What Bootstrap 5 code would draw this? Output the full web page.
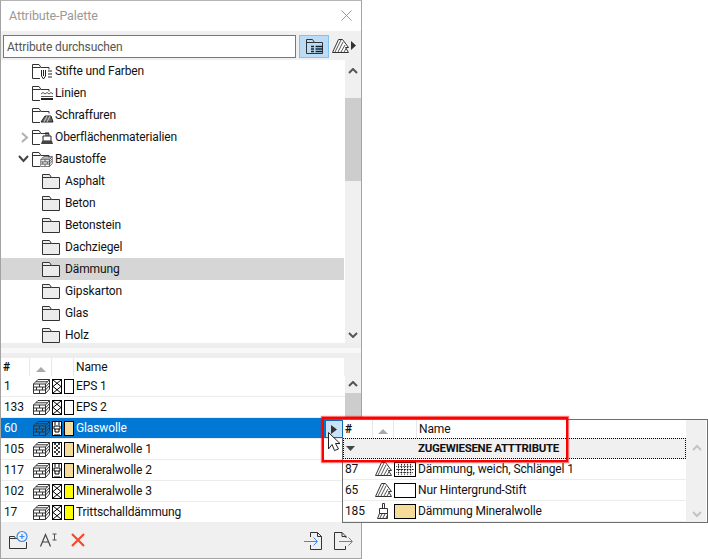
<!DOCTYPE html>
<html lang="de"><head><meta charset="utf-8"><title>Attribute-Palette</title>
<link href="https://cdn.jsdelivr.net/npm/bootstrap@5.3.0/dist/css/bootstrap.min.css" rel="stylesheet">
<style>
html,body{margin:0;height:559px;width:708px;overflow:hidden;background:#fff}
body{font-family:Roboto,"Noto Sans",sans-serif;font-size:12px;letter-spacing:-.12px;line-height:1;color:#111;position:relative}
svg{display:block;flex:none;overflow:visible}
.pal{width:362px;height:559px;border:1px solid #a3a3a3;border-top-color:#b5b5b5;background:#f0f0f0}
.ttl{height:30px;padding:0 9px 0 8px;color:#999;font-size:12.5px;background:#fff}
.tbar{height:29px;background:#f0f0f0;padding:4px 0 3px 2px}
.srch{width:293px;height:23px;border:1px solid #777;background:#fff;color:#555;padding:0 0 0 3px}
.tog{width:30px;height:23px;background:#bcdcf5;border:1px solid #85c1ee;margin-left:3px;padding-left:6px}
.treew{height:283px;background:#f0f0f0}
.treel{width:344px;background:#fff;overflow:hidden}
.tr{height:22px;flex:none}
.tr.sel{background:#d6d6d6;margin-right:1px}
.sp1{width:31px}.sp2{width:41px}
.sb{width:16px;margin-left:0;background:#f0f0f0;position:relative}
.thumb{position:absolute;left:0;right:0;background:#cdcdcd}
.up,.dn{position:absolute;left:3px}
.mini{margin-left:-9px}
.tl1{margin-left:2px}
.tl2{margin-left:5px}
.sep1{height:5px;background:#eee}.sep2{height:5px;background:#f8f8f8}.sep3{height:5px;background:#eee}
.hd{height:18px;width:343px;background:#fff}
.c1{width:28px;padding-left:2px}.c2{width:22px;border-left:1px solid #e8e8e8}.c3{width:22px;border-left:1px solid #e8e8e8}
.hd .c1,.hd .c2,.hd .c3{height:100%}
.nm{border-left:1px solid #e8e8e8;padding:0 0 0 2px;height:100%;display:flex;align-items:center}
.lst{height:146px;background:#fff;overflow:hidden}
.lbody{width:344px}
.rw{height:21px;border-bottom:1px solid #ececec;flex:none}
.rw.on{background:#0078d4;color:#fff}
.n1{width:28px;padding:0 0 0 3px}.ic{width:23px;padding-left:4px}.ic2{width:24px;gap:2px}
.sw{width:10px;height:15px;border:1px solid #000;background:#fff}
.sw.y{background:#ffff00}.sw.t{background:#f5dc9a}
.ftr{height:36px;background:#f0f0f0;padding:0 0 0 8px}
.pop{position:absolute;left:342px;top:419px;width:366px;height:104px;border:1px solid #6e6e6e;background:#fff}
.pl{width:343px}
.ph{height:18px}
.pc1{width:29px;padding:0 0 0 2px}.pc2{width:21px;border-left:1px solid #e8e8e8;height:100%}.pc3{width:23px;border-left:1px solid #e8e8e8;height:100%}
.grp{height:21px;background:#f0f0f0;border:1px dotted #000;width:343px;font-weight:700;font-size:11.5px;letter-spacing:-.3px;flex:none}
.pr{height:21px;border-bottom:1px solid #ececec;flex:none}
.pn{width:32px;padding:0 0 0 2px}.pi{width:19px}
.psw{width:22px;height:15px;border:1px solid #000;background:#fff;margin-right:2px}
.psw.t{background:#f5dc9a}
.psb{background:#f0f0f0;position:relative;margin-right:1px}
.btnx{position:absolute;left:325px;top:420px;width:18px;height:18px;background:#c8e2f7;border:1px solid #0f6cb5}
.redb{position:absolute;left:322px;top:417px;width:246px;height:45px;border:2px solid #f00;box-shadow:0 0 1px 1px rgba(255,0,0,.55)}
.curs{position:absolute;left:328px;top:432px}
</style></head><body>
<svg width="0" height="0" style="position:absolute"><defs>
<symbol id="fd" viewBox="0 0 18 15"><path d="M.5 14.500V.5h7l2 3h8v11z" fill="#ececec" stroke="#333"/><path d="M.5 3.500h9" stroke="#333" fill="none"/></symbol>
<symbol id="fo" viewBox="0 0 18 15"><path d="M8 14.500H.5V.5h6.500l2 3h8v2M.5 3.500h8" fill="none" stroke="#333"/></symbol>
<symbol id="bk" viewBox="0 0 17 15"><path d="M.5 5 5 .5h11.500V10l-4 4.500H.5z" fill="none" stroke="#333"/><path d="M.5 5h12v9.500M12.500 5l4-4.500M.5 8h12M.5 11h12M6.500 5v3M3.500 8v3M9.500 8v3M6.500 11v3M3 2.800h11.500M12.500 8l4-4.500M12.500 11l4-4.500" fill="none" stroke="#333"/></symbol>
<symbol id="hx" viewBox="0 0 10 15"><rect x=".5" y=".5" width="9" height="14" fill="#fff" stroke="#000"/><path d="M1 1l8 6.500L1 14M9 1L1 7.500 9 14" fill="none" stroke="#000"/></symbol>
<symbol id="hg" viewBox="0 0 10 15"><rect x=".5" y=".5" width="9" height="14" fill="#fff" stroke="#000"/><path d="M3 1v3M7 1v3M2 5h6v3H2zM3 8v3M7 8v3M3 11h4M2 14h6" fill="none" stroke="#000"/></symbol>
<symbol id="hm" viewBox="0 0 10 15"><rect x=".5" y=".5" width="9" height="14" fill="#fff" stroke="#000"/><path d="M2 2h2M6 2h2M4 4h2M2 6h2M6 6h2M4 8h2M2 10h2M6 10h2M4 12h2" stroke="#000" fill="none" stroke-width="1.500"/></symbol>
<symbol id="ht" viewBox="0 0 17 14"><path d="M.5 13.500l6-13h4l6 8h-3l3 5z" fill="#fff" stroke="#333"/><path d="M3 13l6-12M6 13l5-10M9 13l4-7M12 13l2.500-4" stroke="#555" fill="none"/></symbol>
<symbol id="upa" viewBox="0 0 10 6"><path d="M1 5l4-4 4 4" fill="none" stroke="#555" stroke-width="2"/></symbol>
<symbol id="dna" viewBox="0 0 10 6"><path d="M1 1l4 4 4-4" fill="none" stroke="#555" stroke-width="2"/></symbol>
<symbol id="ups" viewBox="0 0 10 6"><path d="M0 6l5-5 5 5z" fill="#a9a9a9"/></symbol>
</defs></svg>

<div class="pal d-flex flex-column">
  <div class="ttl d-flex align-items-center justify-content-between">
    <span>Attribute-Palette</span>
    <svg width="11" height="11" viewBox="0 0 11 11" style="margin-top:-1px"><path d="M.5.500l10 10M10.500.500l-10 10" stroke="#999" fill="none"/></svg>
  </div>
  <div class="tbar d-flex align-items-start">
    <div class="srch d-flex align-items-center">Attribute durchsuchen</div>
    <div class="tog d-flex align-items-center">
      <svg width="17" height="15" viewBox="0 0 17 15"><path d="M.5 14.500V.5h6l2 3h8v11z" fill="none" stroke="#333"/><path d="M.5 3.500h8" stroke="#333"/><path d="M5 7.500h3M5 10h3M5 12.500h3M9.500 7.500h7M9.500 10h7M9.500 12.500h7" stroke="#123" stroke-width="1.500"/></svg>
    </div>
    <svg width="17" height="14" viewBox="0 0 17 14" style="margin:4px 0 0 3px"><use href="#ht"/></svg>
    <svg width="5" height="9" viewBox="0 0 5 9" style="margin:6px 0 0 2px"><path d="M0 0l5 4.500L0 9z" fill="#333"/></svg>
  </div>
  <div class="treew d-flex">
    <div class="treel d-flex flex-column">
      <div class="tr d-flex align-items-center"><i class="sp1"></i><svg width="18" height="15"><use href="#fo"/></svg><svg class="mini" width="12" height="15" viewBox="0 0 12 15"><path d="M.5 6v6l2 3 2-3V6M2.500 6v6M7 7h4M7 10h4M7 13h4" fill="none" stroke="#222"/></svg><span class="tl1">Stifte und Farben</span></div>
      <div class="tr d-flex align-items-center"><i class="sp1"></i><svg width="18" height="15"><use href="#fo"/></svg><svg class="mini" width="12" height="15" viewBox="0 0 12 15"><path d="M0 8l2-1.500L4 8l2-1.500L8 8l2-1.500L12 8" fill="none" stroke="#555"/><path d="M0 10.500h12" stroke="#555"/><path d="M0 13h12" stroke="#222" stroke-width="2"/></svg><span class="tl1">Linien</span></div>
      <div class="tr d-flex align-items-center"><i class="sp1"></i><svg width="18" height="15"><use href="#fo"/></svg><svg class="mini" width="12" height="15" viewBox="0 0 12 15"><path d="M0 14l4-6h6l2 6z" fill="#666" stroke="#222"/><path d="M3 14l3-6M6 14l3-6" stroke="#ccc"/></svg><span class="tl1">Schraffuren</span></div>
      <div class="tr d-flex align-items-center"><svg width="8" height="11" viewBox="0 0 8 11" style="margin:0 3px 0 20px"><path d="M1 1l5 4.500-5 4.500" fill="none" stroke="#b0b0b0" stroke-width="2"/></svg><svg width="18" height="15"><use href="#fo"/></svg><svg class="mini" width="12" height="15" viewBox="0 0 12 15"><path d="M5 2v4M7 2v4M2 6h8v5H2z" fill="#fff" stroke="#222"/><path d="M1 11h10l1 3H0z" fill="#444"/></svg><span class="tl1">Oberflächenmaterialien</span></div>
      <div class="tr d-flex align-items-center"><svg width="11" height="8" viewBox="0 0 11 8" style="margin:0 3px 0 17px"><path d="M1 1l4.500 5L10 1" fill="none" stroke="#444" stroke-width="2"/></svg><svg width="18" height="15"><use href="#fo"/></svg><svg width="13" height="11" style="margin:4px 0 0 -10px" viewBox="0 0 17 15"><use href="#bk"/></svg><span class="tl1">Baustoffe</span></div>
      <div class="tr d-flex align-items-center"><i class="sp2"></i><svg width="18" height="15"><use href="#fd"/></svg><span class="tl2">Asphalt</span></div>
      <div class="tr d-flex align-items-center"><i class="sp2"></i><svg width="18" height="15"><use href="#fd"/></svg><span class="tl2">Beton</span></div>
      <div class="tr d-flex align-items-center"><i class="sp2"></i><svg width="18" height="15"><use href="#fd"/></svg><span class="tl2">Betonstein</span></div>
      <div class="tr d-flex align-items-center"><i class="sp2"></i><svg width="18" height="15"><use href="#fd"/></svg><span class="tl2">Dachziegel</span></div>
      <div class="tr sel d-flex align-items-center"><i class="sp2"></i><svg width="18" height="15"><use href="#fd"/></svg><span class="tl2">Dämmung</span></div>
      <div class="tr d-flex align-items-center"><i class="sp2"></i><svg width="18" height="15"><use href="#fd"/></svg><span class="tl2">Gipskarton</span></div>
      <div class="tr d-flex align-items-center"><i class="sp2"></i><svg width="18" height="15"><use href="#fd"/></svg><span class="tl2">Glas</span></div>
      <div class="tr d-flex align-items-center"><i class="sp2"></i><svg width="18" height="15"><use href="#fd"/></svg><span class="tl2">Holz</span></div>
    </div>
    <div class="sb">
      <svg class="up" style="top:8px" width="10" height="6"><use href="#upa"/></svg>
      <div class="thumb" style="top:38px;height:83px"></div>
      <svg class="dn" style="top:272px" width="10" height="6"><use href="#dna"/></svg>
    </div>
  </div>
  <div class="sep1"></div><div class="sep2"></div><div class="sep3"></div>
  <div class="hd d-flex align-items-center">
    <div class="c1 d-flex align-items-center fw-bold">#</div>
    <div class="c2 d-flex align-items-center justify-content-center"><svg width="10" height="6" style="margin-top:4px"><use href="#ups"/></svg></div>
    <div class="c3"></div>
    <div class="nm">Name</div>
  </div>
  <div class="lst d-flex">
    <div class="lbody d-flex flex-column">
      <div class="rw d-flex align-items-center"><div class="n1">1</div><div class="ic"><svg width="17" height="15"><use href="#bk"/></svg></div><div class="ic2 d-flex"><svg width="10" height="15"><use href="#hx"/></svg><div class="sw"></div></div><span>EPS 1</span></div>
      <div class="rw d-flex align-items-center"><div class="n1">133</div><div class="ic"><svg width="17" height="15"><use href="#bk"/></svg></div><div class="ic2 d-flex"><svg width="10" height="15"><use href="#hx"/></svg><div class="sw"></div></div><span>EPS 2</span></div>
      <div class="rw on d-flex align-items-center"><div class="n1">60</div><div class="ic"><svg width="17" height="15"><use href="#bk"/></svg></div><div class="ic2 d-flex"><svg width="10" height="15"><use href="#hg"/></svg><div class="sw t"></div></div><span>Glaswolle</span></div>
      <div class="rw d-flex align-items-center"><div class="n1">105</div><div class="ic"><svg width="17" height="15"><use href="#bk"/></svg></div><div class="ic2 d-flex"><svg width="10" height="15"><use href="#hm"/></svg><div class="sw t"></div></div><span>Mineralwolle 1</span></div>
      <div class="rw d-flex align-items-center"><div class="n1">117</div><div class="ic"><svg width="17" height="15"><use href="#bk"/></svg></div><div class="ic2 d-flex"><svg width="10" height="15"><use href="#hg"/></svg><div class="sw t"></div></div><span>Mineralwolle 2</span></div>
      <div class="rw d-flex align-items-center"><div class="n1">102</div><div class="ic"><svg width="17" height="15"><use href="#bk"/></svg></div><div class="ic2 d-flex"><svg width="10" height="15"><use href="#hx"/></svg><div class="sw y"></div></div><span>Mineralwolle 3</span></div>
      <div class="rw d-flex align-items-center"><div class="n1">17</div><div class="ic"><svg width="17" height="15"><use href="#bk"/></svg></div><div class="ic2 d-flex"><svg width="10" height="15"><use href="#hx"/></svg><div class="sw y"></div></div><span>Trittschalldämmung</span></div>
    </div>
    <div class="sb">
      <svg class="up" style="top:5px" width="10" height="6"><use href="#upa"/></svg>
      <div class="thumb" style="top:17px;height:27px"></div>
    </div>
  </div>
  <div class="ftr d-flex align-items-center">
    <svg width="19" height="18" viewBox="0 0 19 18"><path d="M17.500 11v6.500H.5V5.500h5l1 2h2" fill="none" stroke="#333"/><path d="M.5 7.500h6" stroke="#333"/><circle cx="13" cy="5.500" r="5" fill="#f0f0f0" stroke="#3b8bef" stroke-width="1.200"/><path d="M13 3v5M10.500 5.500h5" stroke="#3b8bef" stroke-width="1.200"/></svg>
    <svg width="17" height="14" viewBox="0 0 17 14" style="margin-left:12px"><path d="M.5 13.500l5-12 5 12M2.500 9h6" fill="none" stroke="#444" stroke-width="1.200"/><path d="M12.500 1h4M14.500 1v6M12.500 7h4" stroke="#555" fill="none"/></svg>
    <svg width="14" height="14" viewBox="0 0 14 14" style="margin-left:14px"><path d="M1 1l12 12M13 1L1 13" stroke="#f5492c" stroke-width="2.200" fill="none"/></svg>
    <div class="ms-auto d-flex" style="gap:11px;margin-right:8px">
      <svg width="19" height="19" viewBox="0 0 19 19"><path d="M6.500 6V1.500h7l4 4v13h-11V14" fill="none" stroke="#333"/><path d="M13.500 1.500v4h4" fill="none" stroke="#333"/><path d="M0 10.500h13M9.500 6.500l4 4-4 4" fill="none" stroke="#3b8bef"/></svg>
      <svg width="19" height="19" viewBox="0 0 19 19"><path d="M12 7V5.500l-4-4H.5v17h11V15M8 1.500v4h4" fill="none" stroke="#333"/><path d="M5 10.500h13M14.500 6.500l4 4-4 4" fill="none" stroke="#3b8bef"/></svg>
    </div>
  </div>
</div>

<div class="pop d-flex">
  <div class="pl d-flex flex-column">
    <div class="ph d-flex align-items-center">
      <div class="pc1 fw-bold">#</div>
      <div class="pc2 d-flex align-items-center justify-content-center"><svg width="10" height="6" style="margin-top:4px"><use href="#ups"/></svg></div>
      <div class="pc3"></div>
      <div class="nm">Name</div>
    </div>
    <div class="grp d-flex align-items-center">
      <svg width="9" height="5" viewBox="0 0 9 5" style="margin:0 0 0 2px"><path d="M0 0h9L4.500 5z" fill="#444"/></svg>
      <span style="margin-left:63px">ZUGEWIESENE ATTTRIBUTE</span>
    </div>
    <div class="pr d-flex align-items-center"><div class="pn">87</div><div class="pi"><svg width="17" height="14"><use href="#ht"/></svg></div><svg class="psw" width="22" height="15" viewBox="0 0 22 15"><path d="M1 7.500h20M3.500 1v13M7 1v13M10.500 1v13M14 1v13M17.500 1v13" stroke="#000" stroke-dasharray="2 1" fill="none"/><path d="M1 4h20M1 11h20" stroke="#000" stroke-dasharray="1 1" fill="none"/></svg><span>Dämmung, weich, Schlängel 1</span></div>
    <div class="pr d-flex align-items-center"><div class="pn">65</div><div class="pi"><svg width="17" height="14"><use href="#ht"/></svg></div><div class="psw"></div><span>Nur Hintergrund-Stift</span></div>
    <div class="pr d-flex align-items-center"><div class="pn">185</div><div class="pi"><svg width="14" height="16" viewBox="0 0 14 16" style="margin-left:2px"><path d="M5.500.5h2v5h-2zM2.500 5.500h8v5h-8z" fill="#fff" stroke="#333"/><path d="M2.500 10.500h8v5H.5z" fill="#fff" stroke="#333"/><path d="M3 15l2-4M6 15l2-4M9 15l1.500-3" stroke="#444"/></svg></div><div class="psw t"></div><span>Dämmung Mineralwolle</span></div>
  </div>
  <div class="psb flex-grow-1">
    <svg style="position:absolute;left:6px;top:25px" width="10" height="6"><path d="M1 5l4-4 4 4" fill="none" stroke="#c4c4c4" stroke-width="2"/></svg>
    <svg style="position:absolute;left:6px;top:91px" width="10" height="6"><path d="M1 1l4 4 4-4" fill="none" stroke="#c4c4c4" stroke-width="2"/></svg>
  </div>
</div>
<div class="btnx d-flex align-items-center justify-content-center"><svg width="6" height="9" viewBox="0 0 6 9"><path d="M0 0l6 4.500L0 9z" fill="#333"/></svg></div>
<div class="redb"></div>
<svg class="curs" width="13" height="19" viewBox="0 0 13 19"><path d="M.5.500 12 11.500H7.500l3 5.500-4 1.500L4 12.500.5 17z" fill="#fff" stroke="#222"/></svg>
</body></html>
